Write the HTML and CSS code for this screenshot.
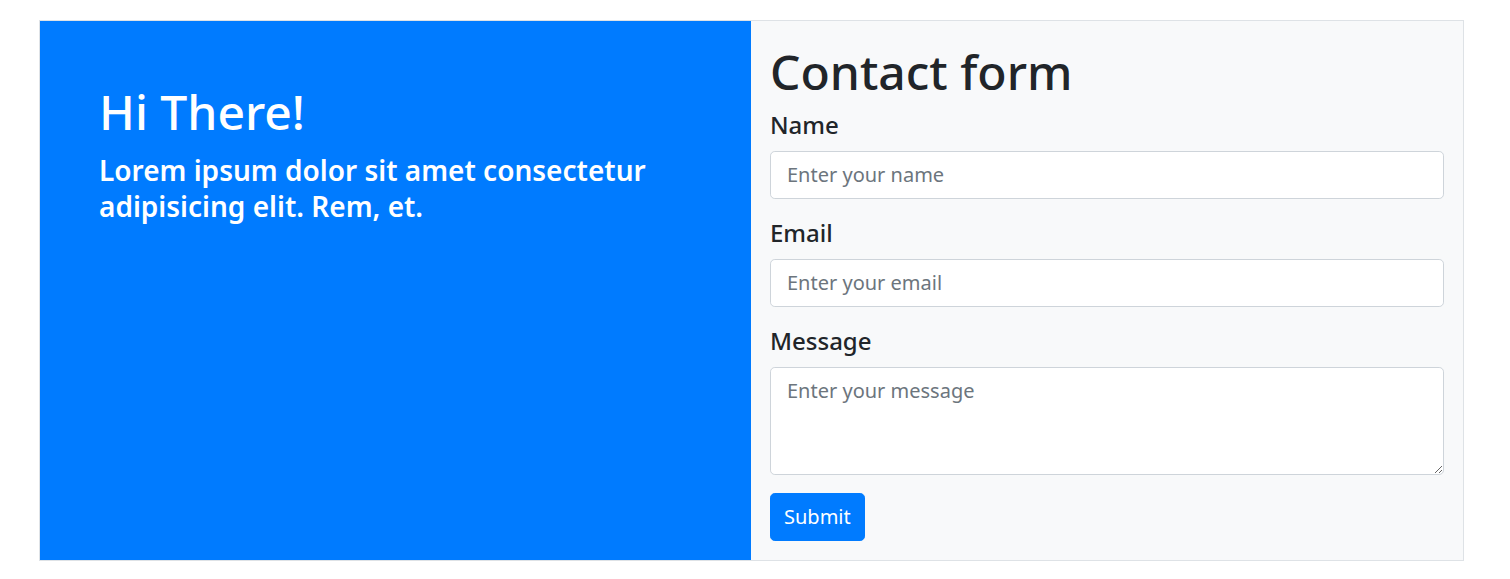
FILE: index.html
```html
<!DOCTYPE html>
<html lang="en">
<head>
<meta charset="utf-8">
<title>Contact</title>
<link rel="stylesheet" href="styles.css">
</head>
<body>
<div class="wrap">
  <section class="hero">
    <h1 class="hero-title">Hi There!</h1>
    <h3 class="hero-sub">Lorem ipsum dolor sit amet consectetur adipisicing elit. Rem, et.</h3>
  </section>
  <section class="panel">
    <h1 class="panel-title">Contact form</h1>
    <form class="form">
      <div class="group">
        <label class="label" for="name">Name</label>
        <input class="control" id="name" type="text" placeholder="Enter your name">
      </div>
      <div class="group">
        <label class="label" for="email">Email</label>
        <input class="control" id="email" type="email" placeholder="Enter your email">
      </div>
      <div class="group group-last">
        <label class="label" for="msg">Message</label>
        <textarea class="control area" id="msg" rows="3" placeholder="Enter your message"></textarea>
      </div>
      <button class="btn" type="button">Submit</button>
    </form>
  </section>
</div>
</body>
</html>
```
FILE: styles.css
```css
* { box-sizing: border-box; }
html, body { margin: 0; padding: 0; background: #fff; }
body {
  font-family: "Noto Sans", "Open Sans", sans-serif;
  color: #212529;
  padding: 20px 46px 0 39px;
}
.wrap {
  display: grid;
  grid-template-columns: 711px 1fr;
  border: 1px solid #dee2e6;
}
.hero {
  background: #007bff;
  color: #fff;
  padding: 62px 60px 60px 59px;
}
.hero-title {
  margin: 0 0 11px;
  font-size: 48px;
  font-weight: 500;
  line-height: 1.2;
}
.hero-sub {
  margin: 0;
  font-size: 28px;
  font-weight: 600;
  line-height: 36px;
}
.panel {
  background: #f8f9fa;
  padding: 20px 19px 19px 19px;
}
.panel-title {
  margin: 0 0 6px;
  padding-top: 2px;
  font-size: 48px;
  font-weight: 500;
  line-height: 1.2;
}
.form { margin: 0; }
.group { margin-bottom: 16px; }
.group-last { margin-bottom: 18px; }
.label {
  display: block;
  font-size: 24px;
  font-weight: 500;
  line-height: 36px;
  margin-bottom: 8px;
}
.control {
  display: block;
  width: 100%;
  height: 48px;
  padding: 8px 16px;
  font-family: inherit;
  font-size: 20px;
  line-height: 30px;
  color: #495057;
  background: #fff;
  border: 1px solid #ced4da;
  border-radius: 4.8px;
  outline: none;
}
.control::placeholder { color: #6c757d; opacity: 1; }
.area {
  height: 108px;
  resize: vertical;
}
.btn {
  display: inline-block;
  font-family: inherit;
  font-size: 20px;
  line-height: 30px;
  padding: 8px 13px;
  color: #fff;
  background: #007bff;
  border: 1px solid #007bff;
  border-radius: 4.8px;
}
```
